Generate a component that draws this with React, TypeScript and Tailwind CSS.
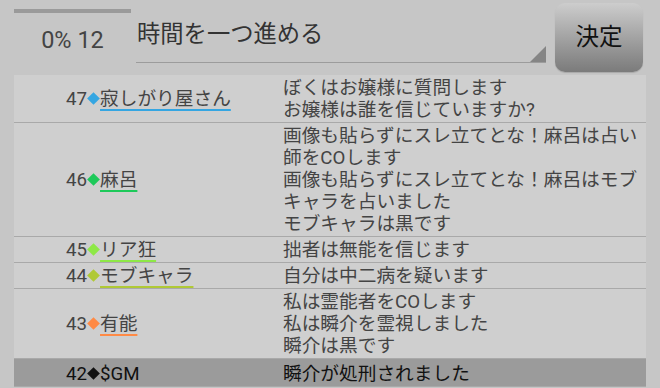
import React from 'react';

type Row = {
  no: number;
  name: string;
  color: string;
  line: string;
  lines: string[];
  system?: boolean;
};

const rows: Row[] = [
  {
    no: 47,
    name: '寂しがり屋さん',
    color: 'bg-[#35a6e2]',
    line: 'decoration-[#35a6e2]',
    lines: ['ぼくはお嬢様に質問します', 'お嬢様は誰を信じていますか?'],
  },
  {
    no: 46,
    name: '麻呂',
    color: 'bg-[#1ec95a]',
    line: 'decoration-[#1ec95a]',
    lines: [
      '画像も貼らずにスレ立てとな！麻呂は占い',
      '師をCOします',
      '画像も貼らずにスレ立てとな！麻呂はモブ',
      'キャラを占いました',
      'モブキャラは黒です',
    ],
  },
  {
    no: 45,
    name: 'リア狂',
    color: 'bg-[#8ee847]',
    line: 'decoration-[#8ee847]',
    lines: ['拙者は無能を信じます'],
  },
  {
    no: 44,
    name: 'モブキャラ',
    color: 'bg-[#b0c935]',
    line: 'decoration-[#b0c935]',
    lines: ['自分は中二病を疑います'],
  },
  {
    no: 43,
    name: '有能',
    color: 'bg-[#ff8a45]',
    line: 'decoration-[#ff8a45]',
    lines: ['私は霊能者をCOします', '私は瞬介を霊視しました', '瞬介は黒です'],
  },
  {
    no: 42,
    name: '$GM',
    color: 'bg-[#111111]',
    line: 'decoration-transparent',
    lines: ['瞬介が処刑されました'],
    system: true,
  },
];

const LogRow: React.FC<{ row: Row }> = ({ row }) => (
  <div
    className={`flex border-b border-[#a9a9a9] ${
      row.system ? 'bg-[#9b9b9b] text-[#111] pt-[2px]' : 'bg-[#cfcfcf] text-[#444]'
    }`}
  >
    {/* speaker column */}
    <div className="w-[269px] shrink-0 pl-[52px] flex items-center">
      <div className="leading-[22px] whitespace-nowrap">
        {row.no}
        <span className={`inline-block w-[9px] h-[9px] rotate-45 mx-[2px] align-[2px] ${row.color}`} />
        <span
          className={`underline decoration-2 underline-offset-[4px] [text-decoration-skip-ink:none] ${row.line}`}
        >
          {row.name}
        </span>
      </div>
    </div>
    {/* message column */}
    <div className="flex-1 py-[1.5px] leading-[22px] whitespace-nowrap">
      {row.lines.map((l, i) => (
        <div key={i}>{l}</div>
      ))}
    </div>
  </div>
);

export default function App() {
  return (
    <div
      className="w-[660px] h-[388px] overflow-hidden bg-[#c6c6c6] text-[18.7px]"
      style={{ fontFamily: "Roboto, 'Noto Sans CJK JP', sans-serif" }}
    >
      {/* Header */}
      <div className="flex h-[75px]">
        <div className="ml-[14px] w-[117px] flex flex-col">
          <div className="mt-[9px] h-[4px] w-full bg-[#9a9a9a]" />
          <div className="mt-[13px] text-center text-[23.5px] leading-[28px] text-[#444]">0% 12</div>
        </div>
        <div className="ml-[5px] w-[410px] h-[63px] relative border-b-[1.5px] border-[#9c9c9c]">
          <div className="pt-[19px] pl-[1px] text-[23.3px] text-[#333] leading-[30px]">
            時間を一つ進める
          </div>
          <div className="absolute right-0 bottom-0 w-0 h-0 border-l-[16px] border-l-transparent border-b-[16px] border-b-[#858585]" />
        </div>
        <div className="ml-[9px] mt-[3px] w-[88px] h-[69px] rounded-[10px] bg-gradient-to-b from-[#cdcdcd] to-[#7b7b7b] flex items-center justify-center text-[23.5px] text-[#111] shadow-[0_1px_1px_rgba(0,0,0,0.15)]">
          決定
        </div>
      </div>

      {/* Log list */}
      <div className="mx-[14px] flex flex-col">
        {rows.map((r) => (
          <LogRow key={r.no} row={r} />
        ))}
      </div>
    </div>
  );
}
